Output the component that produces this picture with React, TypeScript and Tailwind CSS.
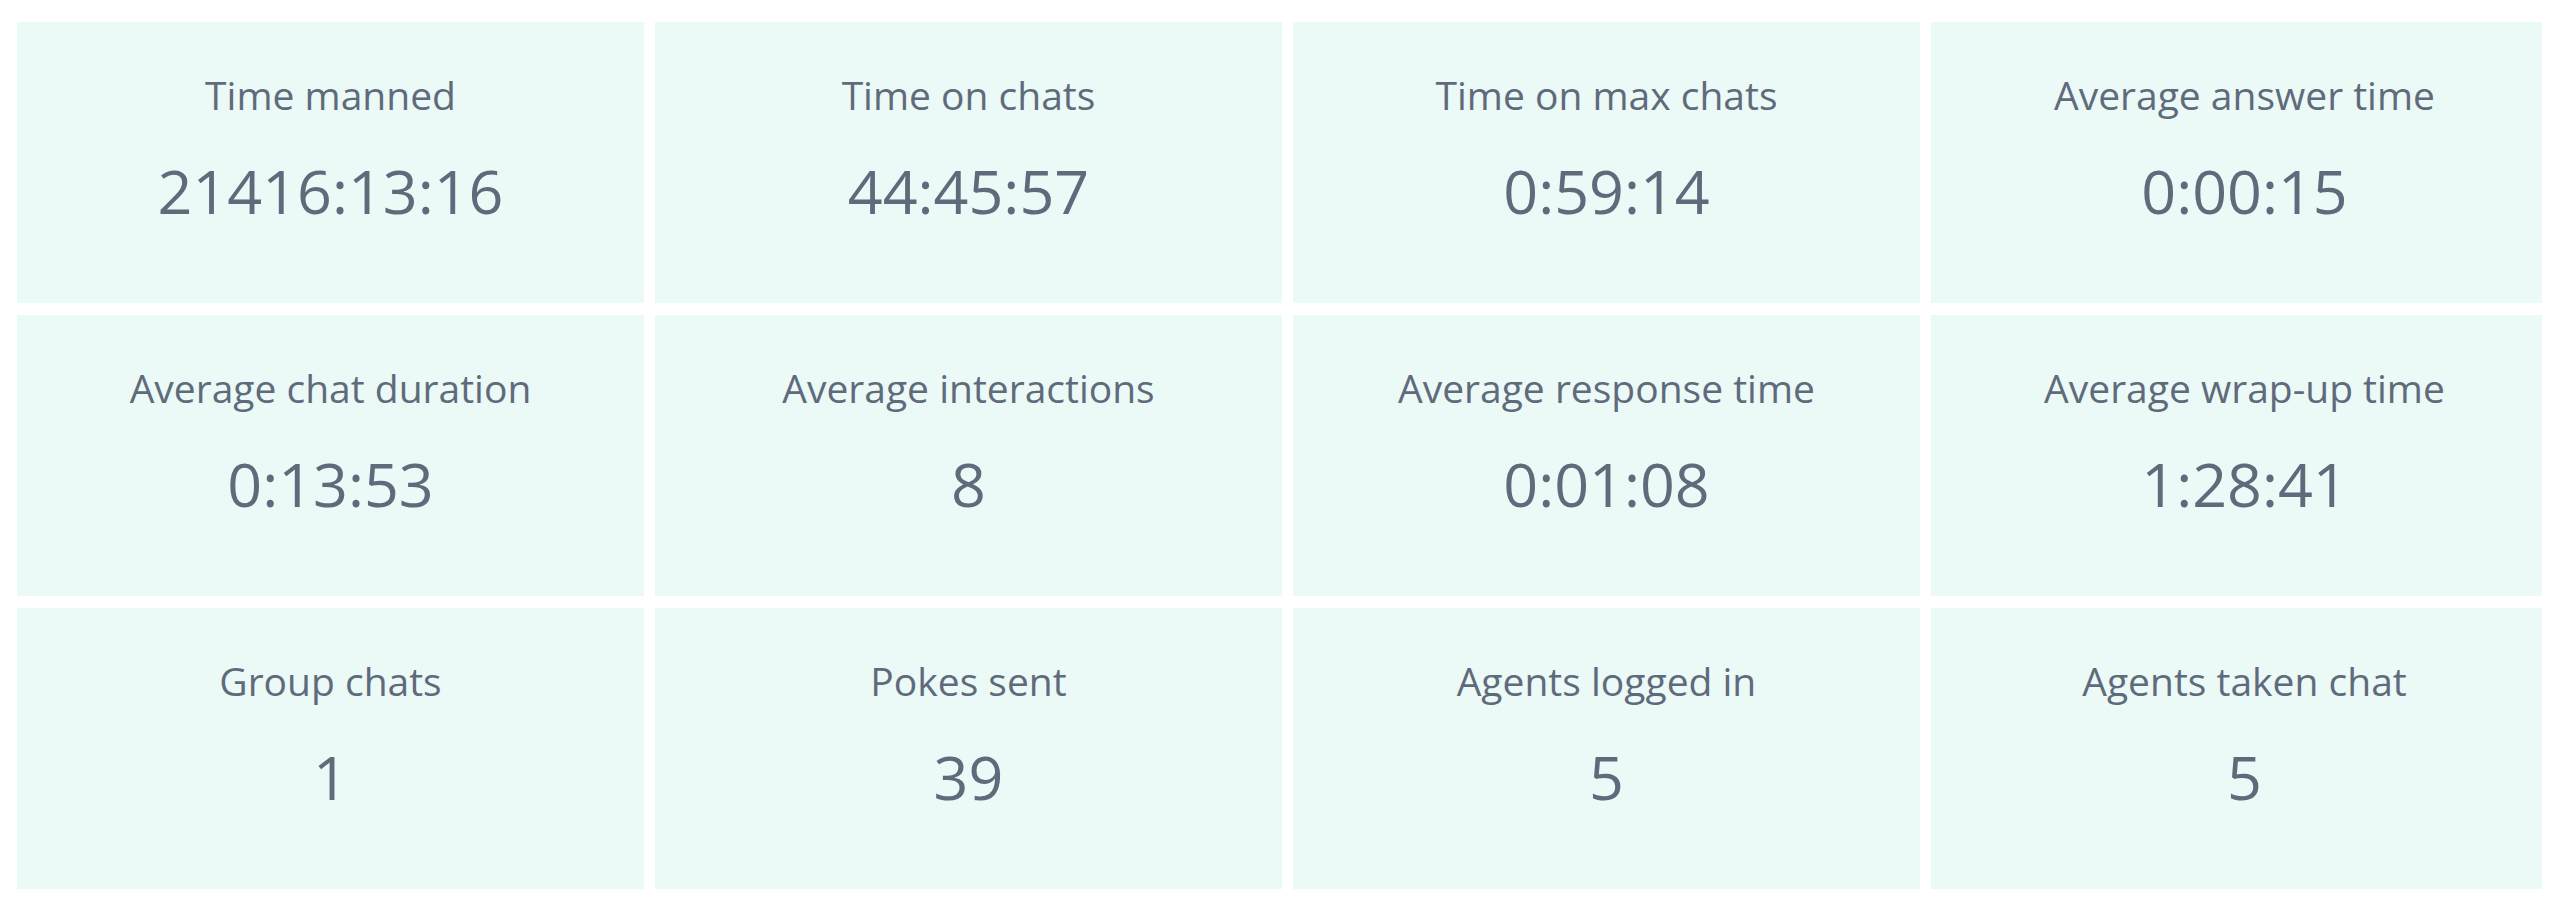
const stats = [
  { label: "Time manned", value: "21416:13:16" },
  { label: "Time on chats", value: "44:45:57" },
  { label: "Time on max chats", value: "0:59:14" },
  { label: "Average answer time", value: "0:00:15" },
  { label: "Average chat duration", value: "0:13:53" },
  { label: "Average interactions", value: "8" },
  { label: "Average response time", value: "0:01:08" },
  { label: "Average wrap-up time", value: "1:28:41" },
  { label: "Group chats", value: "1" },
  { label: "Pokes sent", value: "39" },
  { label: "Agents logged in", value: "5" },
  { label: "Agents taken chat", value: "5" },
];

const StatCard = ({ label, value }: { label: string; value: string }) => (
  <div className="h-[281px] bg-[#ebf9f7] flex flex-col items-center pt-[49px] text-[#5f6b7b] whitespace-nowrap">
    <div className="text-[39px] leading-[47px]">{label}</div>
    <div className="mt-[37px] text-[61px] leading-[72px]">{value}</div>
  </div>
);

const App = () => {
  return (
    <main
      className="w-full min-h-[908px] bg-white pt-[22px] pl-[17px] pr-[18px] pb-[19px]"
      style={{ fontFamily: '"Open Sans", "Noto Sans", sans-serif' }}
    >
      {/* last column runs past the edge and gets cut off */}
      <div className="overflow-hidden">
        <div className="grid grid-cols-[repeat(4,627px)] gap-x-[11px] gap-y-[12px]">
          {stats.map((s) => (
            <StatCard key={s.label} label={s.label} value={s.value} />
          ))}
        </div>
      </div>
    </main>
  );
};

export default App;
